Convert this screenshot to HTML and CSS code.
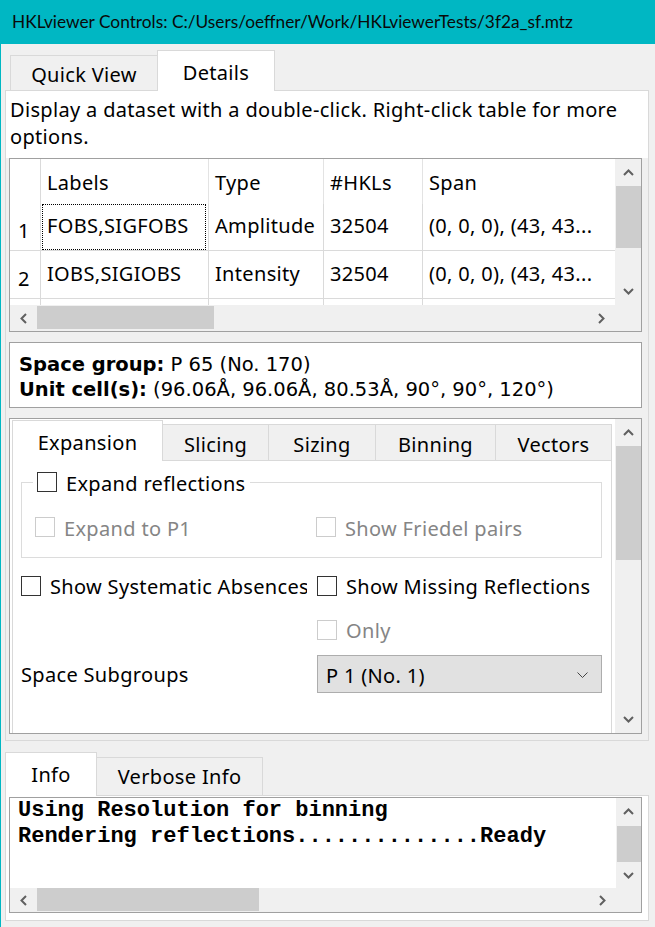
FILE: index.html
```html
<!DOCTYPE html>
<html>
<head>
<meta charset="utf-8">
<title>HKLviewer Controls</title>
<link rel="stylesheet" href="styles.css">
</head>
<body>
<div class="window">
  <div class="titlebar">HKLviewer Controls: C:/Users/oeffner/Work/HKLviewerTests/3f2a_sf.mtz</div>

  <div class="tabbar main-tabs">
    <div class="tab t-quick">Quick View</div>
    <div class="tab active t-details">Details</div>
  </div>

  <div class="pane details">
    <div class="hint">Display a dataset with a double-click. Right-click table for more options.</div>

    <div class="frame table-box">
      <div class="table-view">
        <div class="trow thead">
          <div class="rn"></div>
          <div class="c c1">Labels</div>
          <div class="c c2">Type</div>
          <div class="c c3">#HKLs</div>
          <div class="c c4">Span</div>
        </div>
        <div class="trow r1">
          <div class="rn">1</div>
          <div class="c c1 focus-cell"><div class="focus">FOBS,SIGFOBS</div></div>
          <div class="c c2">Amplitude</div>
          <div class="c c3">32504</div>
          <div class="c c4">(0, 0, 0), (43, 43...</div>
        </div>
        <div class="trow r2">
          <div class="rn">2</div>
          <div class="c c1">IOBS,SIGIOBS</div>
          <div class="c c2">Intensity</div>
          <div class="c c3">32504</div>
          <div class="c c4">(0, 0, 0), (43, 43...</div>
        </div>
        <div class="trow r3">
          <div class="rn"></div>
          <div class="c c1"></div>
          <div class="c c2"></div>
          <div class="c c3"></div>
          <div class="c c4"></div>
        </div>
      </div>
      <div class="vscroll vs-table">
        <div class="arrow"><svg width="11" height="7" viewBox="0 0 11 7"><polyline points="1,6 5.5,1.5 10,6" fill="none" stroke="#606060" stroke-width="2"/></svg></div>
        <div class="track"><div class="thumb"></div></div>
        <div class="arrow"><svg width="11" height="7" viewBox="0 0 11 7"><polyline points="1,1 5.5,5.5 10,1" fill="none" stroke="#606060" stroke-width="2"/></svg></div>
      </div>
      <div class="hscroll hs-table">
        <div class="arrow"><svg width="7" height="11" viewBox="0 0 7 11"><polyline points="6,1 1.5,5.5 6,10" fill="none" stroke="#606060" stroke-width="2"/></svg></div>
        <div class="track"><div class="thumb"></div></div>
        <div class="arrow"><svg width="7" height="11" viewBox="0 0 7 11"><polyline points="1,1 5.5,5.5 1,10" fill="none" stroke="#606060" stroke-width="2"/></svg></div>
      </div>
      <div class="corner"></div>
    </div>

    <div class="frame info-box">
      <div><b>Space group:</b> P 65 (No. 170)</div>
      <div><b>Unit cell(s):</b> (96.06Å, 96.06Å, 80.53Å, 90°, 90°, 120°)</div>
    </div>

    <div class="frame expansion-area">
      <div class="exp-content">
        <div class="tabbar inner-tabs">
          <div class="tab active t-exp">Expansion</div>
          <div class="tab t-slicing">Slicing</div>
          <div class="tab t-sizing">Sizing</div>
          <div class="tab t-binning">Binning</div>
          <div class="tab t-vectors">Vectors</div>
        </div>
        <div class="inner-pane">
          <fieldset class="group">
            <legend class="check"><span class="cb"></span><span class="txt">Expand reflections</span></legend>
            <div class="group-row">
              <div class="check disabled"><span class="cb"></span><span class="txt">Expand to P1</span></div>
              <div class="check disabled"><span class="cb"></span><span class="txt">Show Friedel pairs</span></div>
            </div>
          </fieldset>
          <div class="form-row row-a">
            <div class="cell-left check"><span class="cb"></span><span class="txt">Show Systematic Absences</span></div>
            <div class="check"><span class="cb"></span><span class="txt">Show Missing Reflections</span></div>
          </div>
          <div class="form-row row-b">
            <div class="cell-left"></div>
            <div class="check disabled"><span class="cb"></span><span class="txt">Only</span></div>
          </div>
          <div class="form-row row-c">
            <div class="cell-left label">Space Subgroups</div>
            <div class="combo"><span>P 1 (No. 1)</span><svg width="11" height="6" viewBox="0 0 11 6"><polyline points="0.5,0.5 5.5,5.5 10.5,0.5" fill="none" stroke="#444" stroke-width="1"/></svg></div>
          </div>
        </div>
      </div>
      <div class="vscroll vs-exp">
        <div class="arrow"><svg width="11" height="7" viewBox="0 0 11 7"><polyline points="1,6 5.5,1.5 10,6" fill="none" stroke="#606060" stroke-width="2"/></svg></div>
        <div class="track"><div class="thumb"></div></div>
        <div class="arrow"><svg width="11" height="7" viewBox="0 0 11 7"><polyline points="1,1 5.5,5.5 10,1" fill="none" stroke="#606060" stroke-width="2"/></svg></div>
      </div>
    </div>
  </div>

  <div class="tabbar info-tabs">
    <div class="tab active t-info">Info</div>
    <div class="tab t-verbose">Verbose Info</div>
  </div>
  <div class="pane bottom-pane">
    <div class="frame log-box">
      <div class="log">Using Resolution for binning
Rendering reflections..............Ready</div>
      <div class="vscroll vs-log">
        <div class="arrow"><svg width="11" height="7" viewBox="0 0 11 7"><polyline points="1,6 5.5,1.5 10,6" fill="none" stroke="#606060" stroke-width="2"/></svg></div>
        <div class="track"><div class="thumb"></div></div>
        <div class="arrow"><svg width="11" height="7" viewBox="0 0 11 7"><polyline points="1,1 5.5,5.5 10,1" fill="none" stroke="#606060" stroke-width="2"/></svg></div>
      </div>
      <div class="hscroll hs-log">
        <div class="arrow"><svg width="7" height="11" viewBox="0 0 7 11"><polyline points="6,1 1.5,5.5 6,10" fill="none" stroke="#606060" stroke-width="2"/></svg></div>
        <div class="track"><div class="thumb"></div></div>
        <div class="arrow"><svg width="7" height="11" viewBox="0 0 7 11"><polyline points="1,1 5.5,5.5 1,10" fill="none" stroke="#606060" stroke-width="2"/></svg></div>
      </div>
      <div class="corner"></div>
    </div>
  </div>
</div>
</body>
</html>
```

FILE: styles.css
```css
* { box-sizing: border-box; }

html, body {
  margin: 0;
  padding: 0;
}

body {
  width: 655px;
  height: 927px;
  overflow: hidden;
  background: #f0f0f0;
  font-family: "Noto Sans", "Open Sans", sans-serif;
  font-size: 20px;
  letter-spacing: 0.33px;
  color: #000;
}

.window {
  height: 927px;
  border-left: 1px solid #00b7c3;
}

.titlebar {
  height: 44px;
  line-height: 44px;
  background: #00b7c3;
  padding-left: 11px;
  font-family: "Lato", "Noto Sans", sans-serif;
  font-size: 17.3px;
  letter-spacing: 0;
  color: #0a0a0a;
  white-space: nowrap;
  overflow: hidden;
}

/* ---------- tabs ---------- */
.tabbar {
  display: flex;
  align-items: flex-end;
}

.tab {
  display: flex;
  align-items: center;
  justify-content: center;
  padding-top: 3px;
  background: #f0f0f0;
  border: 1px solid #d9d9d9;
  border-bottom: none;
  border-left: none;
  white-space: nowrap;
}

.tab.active {
  background: #fff;
  border-left: 1px solid #d9d9d9;
  margin-bottom: -1px;
  position: relative;
  z-index: 1;
}

.main-tabs {
  margin-top: 6px;
  height: 40px;
  padding-left: 9px;
}
.t-quick { width: 147px; height: 35px; border-left: 1px solid #d9d9d9; border-right: none; }
.t-details { width: 118px; height: 41px; }

/* ---------- panes ---------- */
.pane {
  margin-left: 4px;
  width: 644px;
  border: 1px solid #d9d9d9;
}

.details {
  height: 651px;
  background: #f0f0f0;
  display: flex;
  flex-direction: column;
}

.hint {
  height: 67px;
  background: #fff;
  padding: 5px 0 0 4px;
  line-height: 27px;
  flex: none;
}

.frame {
  margin-left: 3px;
  width: 633px;
  border: 1px solid #a0a0a0;
  background: #fff;
  flex: none;
}

/* ---------- table ---------- */
.table-box {
  height: 174px;
  display: grid;
  grid-template-columns: 1fr 26px;
  grid-template-rows: 1fr 26px;
  overflow: hidden;
}

.table-view {
  overflow: hidden;
  background: #fff;
}

.trow {
  display: flex;
  white-space: nowrap;
}

.thead { height: 45px; }
.r1 { height: 47px; border-bottom: 1px solid #dadada; }
.r2 { height: 48px; border-bottom: 1px solid #dadada; }
.r3 { height: 20px; }

.rn {
  width: 31px;
  flex: none;
  border-right: 1px solid #dadada;
  display: flex;
  align-items: center;
  justify-content: center;
  padding-top: 7px;
  padding-right: 2px;
}

.c {
  flex: none;
  display: flex;
  align-items: center;
  padding-left: 6px;
  border-right: 1px solid #dadada;
  overflow: hidden;
}
.thead .c { padding-top: 1px; border-right-color: #e3e3e3; }
.r1 .c, .r2 .c { padding-bottom: 3px; }

.c1 { width: 168px; }
.c2 { width: 115px; }
.c3 { width: 99px; }
.c4 { width: 260px; border-right: none; }

.focus-cell { padding: 0 2px 0 1px; align-items: stretch; }
.r1 .focus-cell { padding-bottom: 0; }
.focus {
  flex: 1;
  border: 1px dotted #000;
  display: flex;
  align-items: center;
  padding-left: 4px;
  padding-bottom: 3px;
}

/* ---------- scrollbars ---------- */
.vscroll {
  background: #f0f0f0;
  display: flex;
  flex-direction: column;
}
.vscroll .arrow {
  height: 27px;
  flex: none;
  display: flex;
  align-items: center;
  justify-content: center;
}
.vscroll .track { flex: 1; }
.vscroll .thumb { background: #cdcdcd; margin-left: 1px; }

.hscroll {
  background: #f0f0f0;
  display: flex;
}
.hscroll .arrow {
  width: 27px;
  flex: none;
  display: flex;
  align-items: center;
  justify-content: center;
}
.hscroll .track { flex: 1; display: flex; }
.hscroll .thumb { background: #cdcdcd; margin: 1px 0 2px 0; }

.corner { background: #f0f0f0; }

.vs-table .thumb { height: 62px; }
.hs-table .thumb { width: 177px; }

/* ---------- info ---------- */
.info-box {
  margin-top: 10px;
  height: 66px;
  padding: 9px 0 0 9px;
  line-height: 25px;
  white-space: nowrap;
  font-family: "DejaVu Sans", "Noto Sans", sans-serif;
  font-size: 19.5px;
  letter-spacing: 0;
}
.info-box b { font-weight: 700; }

/* ---------- expansion ---------- */
.expansion-area {
  margin-top: 10px;
  height: 316px;
  display: grid;
  grid-template-columns: 1fr 26px;
  overflow: hidden;
}

.exp-content {
  overflow: hidden;
  background: #fff;
  padding-top: 1px;
  padding-left: 2px;
}

.inner-tabs { height: 40px; }
.t-exp { width: 151px; height: 41px; }
.t-slicing { width: 106px; height: 36px; }
.t-sizing { width: 107px; height: 36px; }
.t-binning { width: 120px; height: 36px; }
.t-vectors { width: 116px; height: 36px; }

.inner-pane {
  width: 600px;
  height: 320px;
  border: 1px solid #d9d9d9;
  background: #fff;
  padding-left: 8px;
  padding-top: 9px;
}

.check {
  display: flex;
  align-items: center;
  gap: 9px;
  white-space: nowrap;
}
.check .txt { padding-top: 0; }
.cb {
  width: 20px;
  height: 20px;
  flex: none;
  border: 1px solid #333;
  background: #fff;
}
.check.disabled { color: #858585; }
.check.disabled .cb { border-color: #cccccc; }

.group {
  margin: 0;
  width: 581px;
  border: 1px solid #dcdcdc;
  padding: 19px 0 16px 11px;
  min-width: 0;
}
.group legend {
  padding: 0 4px;
  height: 24px;
  line-height: 24px;
}
.group legend .txt { padding-top: 3px; line-height: 24px; }
.group-row {
  display: flex;
  height: 28px;
  align-items: center;
  padding-left: 2px;
}
.group-row .check:first-child { width: 281px; }
.group-row .check .txt { padding-top: 2px; }

.form-row {
  display: flex;
  gap: 10px;
  align-items: center;
}
.row-a { height: 32px; margin-top: 12px; }
.row-b { height: 32px; margin-top: 12px; }
.row-c { height: 38px; margin-top: 9px; }

.cell-left {
  width: 286px;
  flex: none;
  overflow: hidden;
}
.label { padding-top: 0; }

.combo {
  width: 285px;
  height: 38px;
  background: #e1e1e1;
  border: 1px solid #adadad;
  display: flex;
  align-items: center;
  justify-content: space-between;
  padding: 2px 13px 0 8px;
}

.vs-exp .thumb { height: 114px; }

/* ---------- bottom ---------- */
.info-tabs {
  margin-top: 11px;
  height: 43px;
  padding-left: 4px;
}
.info-tabs .tab { padding-top: 0; padding-bottom: 1px; }
.t-info { width: 92px; height: 44px; }
.t-verbose { width: 166px; height: 38px; }

.bottom-pane {
  height: 126px;
  background: #fff;
  padding-top: 1px;
}

.log-box {
  height: 116px;
  display: grid;
  grid-template-columns: 1fr 25px;
  grid-template-rows: 1fr 24px;
  overflow: hidden;
}

.log {
  font-family: "Liberation Mono", "Courier New", monospace;
  font-weight: 700;
  font-size: 22px;
  line-height: 26px;
  letter-spacing: 0;
  white-space: pre;
  padding-left: 8px;
  overflow: hidden;
}

.vs-log .arrow { height: 26px; }
.vs-log .track { padding-top: 2px; }
.vs-log .thumb { height: 36px; }
.hs-log .thumb { width: 222px; margin: 0 0 1px 0; }
```
